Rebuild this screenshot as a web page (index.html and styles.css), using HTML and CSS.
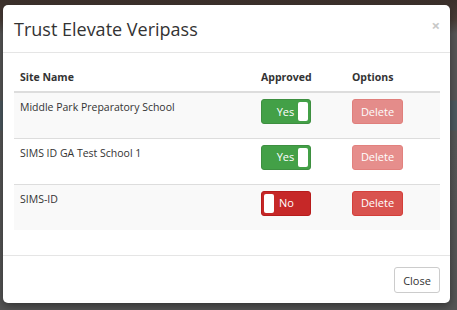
FILE: index.html
```html
<!DOCTYPE html>
<html>
<head>
<meta charset="utf-8">
<link rel="stylesheet" href="styles.css">
</head>
<body>
<div class="modal">
  <div class="modal-header">
    <h4 class="modal-title">Trust Elevate Veripass</h4>
    <span class="close">×</span>
  </div>
  <div class="modal-body">
    <table class="table">
      <thead>
        <tr><th class="c-name">Site Name</th><th class="c-appr">Approved</th><th class="c-opt">Options</th></tr>
      </thead>
      <tbody>
        <tr class="striped">
          <td>Middle Park Preparatory School</td>
          <td><span class="toggle on"><span class="lbl">Yes</span><span class="handle"></span></span></td>
          <td><span class="btn-del disabled">Delete</span></td>
        </tr>
        <tr>
          <td>SIMS ID GA Test School 1</td>
          <td><span class="toggle on"><span class="lbl">Yes</span><span class="handle"></span></span></td>
          <td><span class="btn-del disabled">Delete</span></td>
        </tr>
        <tr class="striped">
          <td>SIMS-ID</td>
          <td><span class="toggle off"><span class="handle"></span><span class="lbl">No</span></span></td>
          <td><span class="btn-del">Delete</span></td>
        </tr>
      </tbody>
    </table>
  </div>
  <div class="modal-footer">
    <span class="btn-close">Close</span>
  </div>
</div>
</body>
</html>
```
FILE: styles.css
```css
* { box-sizing: border-box; }
html, body { margin: 0; padding: 0; }
body {
  width: 457px;
  height: 310px;
  overflow: hidden;
  font-family: "Open Sans", "Liberation Sans", sans-serif;
  color: #333;
  background:
    linear-gradient(to bottom, #3b302b 0px, #4a3e38 20px, #575757 34px, #575757 100px, #4d5a60 101px, #4d5a60 130px, #575757 131px, #555 310px);
  padding: 5px 7px 0 3px;
}
.modal {
  background: #fff;
  border-radius: 5px;
  height: 298px;
  display: flex;
  flex-direction: column;
  box-shadow: 0 3px 9px rgba(0,0,0,.4);
}
.modal-header {
  height: 48px;
  border-bottom: 1px solid #e5e5e5;
  display: flex;
  align-items: flex-start;
  justify-content: space-between;
  padding: 11px 10px 0 11px;
}
.modal-title {
  margin: 0;
  font-size: 18px;
  font-weight: 400;
  line-height: 26px;
  color: #333;
}
.close {
  font-size: 15px;
  font-weight: 700;
  color: #c8c8c8;
  line-height: 14px;
  margin-top: 2px;
}
.modal-body {
  padding: 10px 10px 0 11px;
  height: 203px;
  border-bottom: 1px solid #e5e5e5;
}
.table {
  width: 426px;
  border-collapse: collapse;
  font-size: 10.5px;
}
.table th {
  text-align: left;
  font-weight: 700;
  padding: 6px 6px 6px;
  line-height: 16px;
  border-bottom: 2px solid #ddd;
  color: #333;
}
.c-name { width: 241px; }
.c-appr { width: 91px; }
.table td {
  padding: 6px 6px 0;
  height: 46px;
  vertical-align: top;
  line-height: 16px;
  border-top: 1px solid #ddd;
  color: #333;
}
.table tbody tr:first-child td { border-top: 0; }
.striped td { background: #f9f9f9; }
.toggle {
  display: flex;
  width: 50px;
  height: 25px;
  border-radius: 3px;
  padding: 2px;
  align-items: stretch;
  color: #fff;
  font-size: 11px;
}
.toggle.on { background: #43a047; border: 1px solid #3d8f40; }
.toggle.off { background: #c62828; border: 1px solid #b71c1c; }
.toggle .lbl {
  flex: 1;
  display: flex;
  align-items: center;
  justify-content: center;
}
.toggle.on .lbl { padding-left: 9px; }
.toggle.off .lbl { justify-content: flex-start; padding-left: 5px; }
.handle {
  width: 10px;
  background: #fff;
  border-radius: 2px;
}
.btn-del {
  display: flex;
  align-items: center;
  justify-content: center;
  width: 51px;
  height: 25px;
  border-radius: 3px;
  background: #d9534f;
  border: 1px solid #d43f3a;
  color: #fff;
  font-size: 11px;
}
.btn-del.disabled { opacity: .65; }
.modal-footer {
  flex: 1;
  display: flex;
  justify-content: flex-end;
  align-items: flex-start;
  padding: 11px 10px 0 0;
}
.btn-close {
  display: flex;
  align-items: center;
  justify-content: center;
  width: 46px;
  height: 26px;
  border: 1px solid #ccc;
  border-radius: 3px;
  font-size: 11px;
  color: #333;
  background: #fff;
}
```
